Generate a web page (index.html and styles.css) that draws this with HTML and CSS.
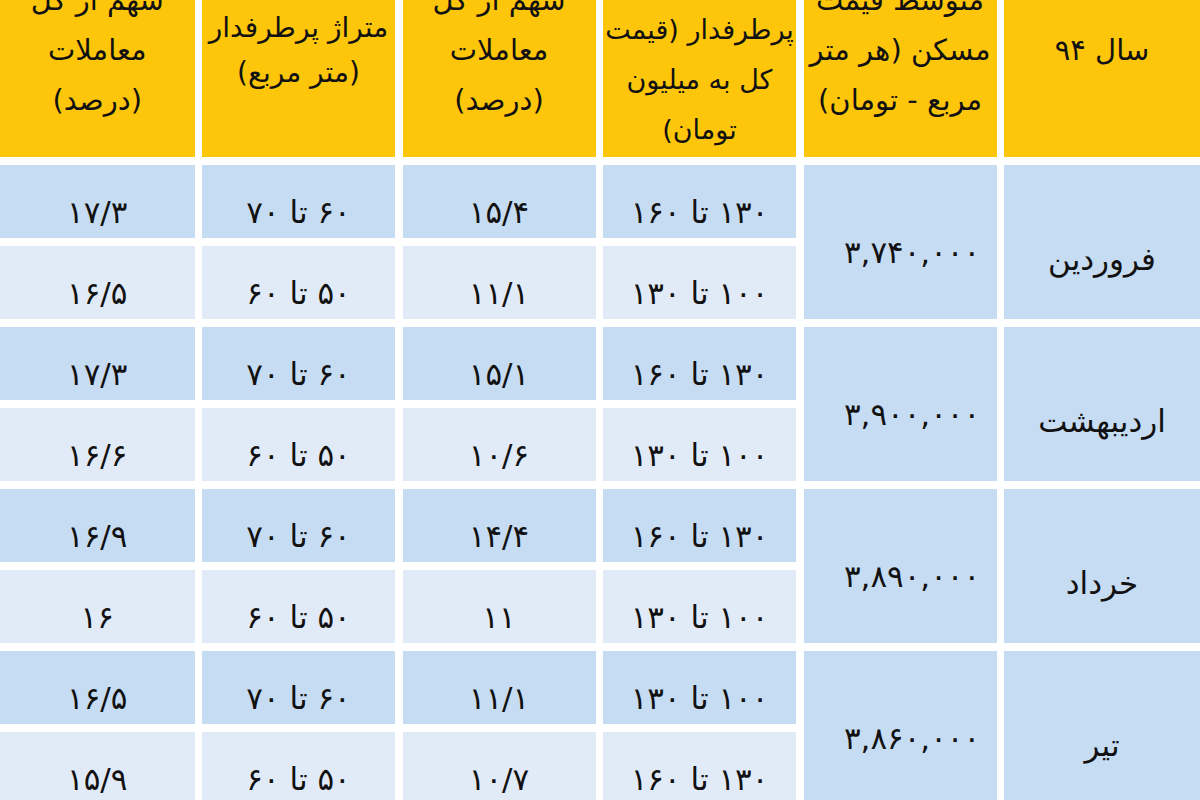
FILE: index.html
```html
<!DOCTYPE html>
<html lang="fa" dir="rtl">
<head>
<meta charset="utf-8">
<title>قیمت مسکن سال ۹۴</title>
<link rel="stylesheet" href="styles.css">
</head>
<body>
<div class="table">
  <div class="th">سال ۹۴</div>
  <div class="th">متوسط قیمت<br>مسکن (هر متر<br>مربع - تومان)</div>
  <div class="th th4">قیمت آپارتمان‌های<br>پرطرفدار (قیمت<br>کل به میلیون<br>تومان)</div>
  <div class="th">سهم از کل<br>معاملات<br>(درصد)</div>
  <div class="th th2">متراژ پرطرفدار<br>(متر مربع)</div>
  <div class="th">سهم از کل<br>معاملات<br>(درصد)</div>

  <div class="td month">فروردین</div>
  <div class="td month avg">۳,۷۴۰,۰۰۰</div>
  <div class="td">۱۳۰ تا ۱۶۰</div>
  <div class="td">۱۵/۴</div>
  <div class="td">۶۰ تا ۷۰</div>
  <div class="td">۱۷/۳</div>
  <div class="td light">۱۰۰ تا ۱۳۰</div>
  <div class="td light">۱۱/۱</div>
  <div class="td light">۵۰ تا ۶۰</div>
  <div class="td light">۱۶/۵</div>

  <div class="td month">اردیبهشت</div>
  <div class="td month avg">۳,۹۰۰,۰۰۰</div>
  <div class="td">۱۳۰ تا ۱۶۰</div>
  <div class="td">۱۵/۱</div>
  <div class="td">۶۰ تا ۷۰</div>
  <div class="td">۱۷/۳</div>
  <div class="td light">۱۰۰ تا ۱۳۰</div>
  <div class="td light">۱۰/۶</div>
  <div class="td light">۵۰ تا ۶۰</div>
  <div class="td light">۱۶/۶</div>

  <div class="td month">خرداد</div>
  <div class="td month avg">۳,۸۹۰,۰۰۰</div>
  <div class="td">۱۳۰ تا ۱۶۰</div>
  <div class="td">۱۴/۴</div>
  <div class="td">۶۰ تا ۷۰</div>
  <div class="td">۱۶/۹</div>
  <div class="td light">۱۰۰ تا ۱۳۰</div>
  <div class="td light">۱۱</div>
  <div class="td light">۵۰ تا ۶۰</div>
  <div class="td light">۱۶</div>

  <div class="td month">تیر</div>
  <div class="td month avg">۳,۸۶۰,۰۰۰</div>
  <div class="td">۱۰۰ تا ۱۳۰</div>
  <div class="td">۱۱/۱</div>
  <div class="td">۶۰ تا ۷۰</div>
  <div class="td">۱۶/۵</div>
  <div class="td light">۱۳۰ تا ۱۶۰</div>
  <div class="td light">۱۰/۷</div>
  <div class="td light">۵۰ تا ۶۰</div>
  <div class="td light">۱۵/۹</div>
</div>
</body>
</html>
```
FILE: styles.css
```css
html, body {
  margin: 0;
  padding: 0;
  background: #ffffff;
  overflow: hidden;
  height: 800px;
}

.table {
  direction: rtl;
  display: grid;
  grid-template-columns: 196px 193px 193px 193px 193px 194.5px;
  grid-template-rows: 214px repeat(8, 73.5px);
  gap: 7.5px;
  margin-top: -57px;
  font-family: "DejaVu Sans", "Noto Sans", sans-serif;
  color: #111111;
}

.th {
  background: #fec60b;
  display: flex;
  align-items: center;
  justify-content: center;
  text-align: center;
  font-size: 29px;
  line-height: 50px;
  white-space: nowrap;
  overflow: hidden;
}

.th2 {
  line-height: 45px;
  font-size: 28px;
}

.th4 {
  font-size: 27px;
  padding-top: 10px;
}

.td {
  background: #c6dcf3;
  display: flex;
  align-items: center;
  justify-content: center;
  text-align: center;
  font-size: 31px;
  padding-top: 22px;
  box-sizing: border-box;
  white-space: nowrap;
}

.td.light {
  background: #e1eaf7;
}

.month {
  grid-row: span 2;
  padding-top: 34px;
}

.avg {
  padding-top: 20px;
  padding-left: 24px;
  letter-spacing: 4px;
}
```
